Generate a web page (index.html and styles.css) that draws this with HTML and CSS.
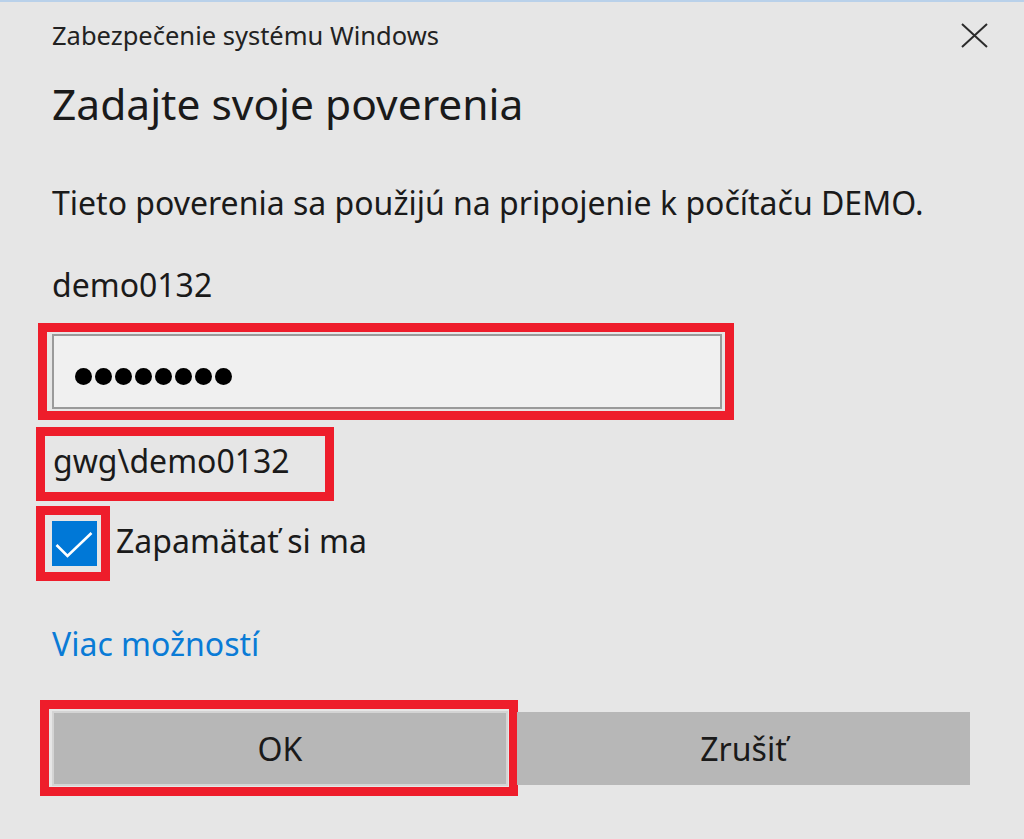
FILE: index.html
```html
<!DOCTYPE html>
<html lang="sk">
<head>
<meta charset="utf-8">
<title>Zabezpečenie systému Windows</title>
<link rel="stylesheet" href="styles.css">
</head>
<body>
<div class="dialog">
  <div class="titlebar">
    <div class="title">Zabezpečenie systému Windows</div>
    <svg class="close" width="27" height="25" viewBox="0 0 27 25" aria-label="Zavrieť">
      <path d="M1 1 L26 24 M26 1 L1 24" stroke="#2b2b2b" stroke-width="2" fill="none"/>
    </svg>
  </div>
  <div class="content">
    <h1 class="heading">Zadajte svoje poverenia</h1>
    <p class="desc">Tieto poverenia sa použijú na pripojenie k počítaču DEMO.</p>
    <p class="user">demo0132</p>
    <div class="mark mark-input">
      <div class="password">
        <span class="dot"></span><span class="dot"></span><span class="dot"></span><span class="dot"></span><span class="dot"></span><span class="dot"></span><span class="dot"></span><span class="dot"></span>
      </div>
    </div>
    <div class="mark mark-domain">gwg\demo0132</div>
    <div class="remember">
      <div class="mark mark-check">
        <span class="checkbox">
          <svg width="45" height="45" viewBox="0 0 45 45"><path d="M4.5 24 L15.5 35 L39.5 12" stroke="#fff" stroke-width="2.6" fill="none"/></svg>
        </span>
      </div>
      <span class="remember-label">Zapamätať si ma</span>
    </div>
    <a class="more" href="#">Viac možností</a>
    <div class="buttons">
      <div class="mark mark-ok"><button class="btn btn-ok">OK</button></div>
      <button class="btn btn-cancel">Zrušiť</button>
    </div>
  </div>
</div>
</body>
</html>
```
FILE: styles.css
```css
html, body {
  margin: 0;
  padding: 0;
  background: #e6e6e6;
}
body {
  font-family: "Noto Sans", "Open Sans", sans-serif;
  color: #1a1a1a;
}
.dialog {
  border-top: 2px solid #b9d1ea;
  min-height: 837px;
  box-sizing: border-box;
}
.titlebar {
  display: flex;
  align-items: center;
  justify-content: space-between;
  padding: 18px 36px 0 52px;
}
.title {
  font-size: 25.5px;
  line-height: 30px;
  color: #222;
}
.close {
  display: block;
  margin-top: 1px;
}
.content {
  padding: 0 54px 0 52px;
}
.heading {
  margin: 30px 0 0;
  font-size: 42.5px;
  line-height: 48px;
  font-weight: normal;
  color: #1a1a1a;
}
.desc {
  margin: 56px 0 0;
  font-size: 32px;
  line-height: 38px;
}
.user {
  margin: 44px 0 0;
  font-size: 32px;
  line-height: 38px;
}
.mark {
  border: 9px solid #ee1d2b;
  box-sizing: border-box;
}
.mark-input {
  margin: 19px 0 0 -14px;
  width: 696px;
  padding: 2px 3px 2px 5px;
}
.password {
  height: 75px;
  box-sizing: border-box;
  border: 2px solid #9a9a9a;
  background: #f0f0f0;
  padding: 32px 0 0 21px;
  display: flex;
  gap: 3px;
}
.dot {
  width: 17px;
  height: 17px;
  border-radius: 50%;
  background: #000;
}
.mark-domain {
  margin: 7px 0 0 -16px;
  width: 298px;
  height: 74px;
  padding: 3px 0 0 8px;
  font-size: 32px;
  line-height: 44px;
}
.remember {
  display: flex;
  align-items: center;
  margin: 5px 0 0 -16px;
}
.mark-check {
  width: 74px;
  height: 75px;
  padding: 6px 0 0 7px;
}
.checkbox {
  display: block;
  width: 45px;
  height: 45px;
  background: #0078d7;
}
.checkbox svg {
  display: block;
}
.remember-label {
  margin: 0 0 6px 6px;
  font-size: 32px;
  line-height: 38px;
}
.more {
  display: block;
  width: fit-content;
  margin-top: 44px;
  font-size: 32px;
  line-height: 38px;
  color: #0a7bd6;
  text-decoration: none;
}
.buttons {
  display: flex;
  align-items: center;
  margin-top: 37px;
}
.mark-ok {
  margin-left: -12px;
  padding: 2px 1px 1px 3px;
}
.btn {
  font-family: inherit;
  font-size: 32px;
  color: #1a1a1a;
  background: #b7b7b7;
  border: none;
  margin: 0;
  padding: 0;
  cursor: default;
}
.btn-ok {
  display: block;
  width: 456px;
  height: 75px;
  border: 2px solid #d4d4d4;
}
.btn-cancel {
  flex: 1;
  height: 73px;
  margin-left: -1px;
}
```
